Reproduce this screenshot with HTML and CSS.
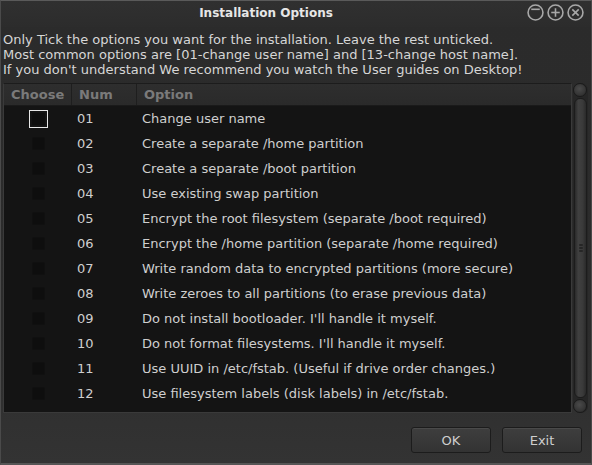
FILE: index.html
```html
<!DOCTYPE html>
<html>
<head>
<meta charset="utf-8">
<link rel="stylesheet" href="styles.css">
</head>
<body>
<div class="window">
  <div class="titlebar">
    <div class="title">Installation Options</div>
    <div class="controls">
      <svg class="ctl" viewBox="0 0 16 16"><circle cx="8" cy="8" r="7" /><line x1="4" y1="5" x2="12" y2="5"/></svg>
      <svg class="ctl" viewBox="0 0 16 16"><circle cx="8" cy="8" r="7" /><line x1="4" y1="8" x2="12" y2="8"/><line x1="8" y1="4" x2="8" y2="12"/></svg>
      <svg class="ctl" viewBox="0 0 16 16"><circle cx="8" cy="8" r="7" /><line x1="5" y1="5" x2="11" y2="11"/><line x1="11" y1="5" x2="5" y2="11"/></svg>
    </div>
  </div>
  <div class="intro">
    <p>Only Tick the options you want for the installation. Leave the rest unticked.</p>
    <p>Most common options are [01-change user name] and [13-change host name].</p>
    <p>If you don't understand We recommend you watch the User guides on Desktop!</p>
  </div>
  <div class="content">
    <div class="table">
      <div class="head">
        <div class="hc c1">Choose</div>
        <div class="hc c2">Num</div>
        <div class="hc c3">Option</div>
      </div>
      <div class="rows">
        <div class="row"><div class="c1"><span class="cb focus"></span></div><div class="c2">01</div><div class="c3">Change user name</div></div>
        <div class="row"><div class="c1"><span class="cb"></span></div><div class="c2">02</div><div class="c3">Create a separate /home partition</div></div>
        <div class="row"><div class="c1"><span class="cb"></span></div><div class="c2">03</div><div class="c3">Create a separate /boot partition</div></div>
        <div class="row"><div class="c1"><span class="cb"></span></div><div class="c2">04</div><div class="c3">Use existing swap partition</div></div>
        <div class="row"><div class="c1"><span class="cb"></span></div><div class="c2">05</div><div class="c3">Encrypt the root filesystem (separate /boot required)</div></div>
        <div class="row"><div class="c1"><span class="cb"></span></div><div class="c2">06</div><div class="c3">Encrypt the /home partition (separate /home required)</div></div>
        <div class="row"><div class="c1"><span class="cb"></span></div><div class="c2">07</div><div class="c3">Write random data to encrypted partitions (more secure)</div></div>
        <div class="row"><div class="c1"><span class="cb"></span></div><div class="c2">08</div><div class="c3">Write zeroes to all partitions (to erase previous data)</div></div>
        <div class="row"><div class="c1"><span class="cb"></span></div><div class="c2">09</div><div class="c3">Do not install bootloader. I'll handle it myself.</div></div>
        <div class="row"><div class="c1"><span class="cb"></span></div><div class="c2">10</div><div class="c3">Do not format filesystems. I'll handle it myself.</div></div>
        <div class="row"><div class="c1"><span class="cb"></span></div><div class="c2">11</div><div class="c3">Use UUID in /etc/fstab. (Useful if drive order changes.)</div></div>
        <div class="row"><div class="c1"><span class="cb"></span></div><div class="c2">12</div><div class="c3">Use filesystem labels (disk labels) in /etc/fstab.</div></div>
      </div>
    </div>
    <div class="scrollbar">
      <div class="knob"></div>
      <div class="thumb"><div class="grip"><i></i><i></i><i></i></div></div>
      <div class="knob"></div>
    </div>
  </div>
  <div class="buttons">
    <button class="btn">OK</button>
    <button class="btn">Exit</button>
  </div>
</div>
</body>
</html>
```

FILE: styles.css
```css
* { box-sizing: border-box; }
html, body { margin: 0; padding: 0; background: #2a2a2a; }
body {
  font-family: "DejaVu Sans", "Liberation Sans", sans-serif;
  font-size: 13px;
  color: #d6d6d6;
}
.window {
  width: 592px;
  height: 465px;
  display: flex;
  flex-direction: column;
  background: linear-gradient(#2b2b2b, #2c2c2c 70%, #333333);
  border: 1px solid #4a4a4a;
  border-top-color: #5a5a5a;
  border-bottom: 2px solid #555;
}
.titlebar {
  height: 26px;
  flex: none;
  display: flex;
  align-items: center;
  justify-content: center;
  position: relative;
  background: linear-gradient(#303030, #2c2c2c);
}
.title {
  font-weight: bold;
  color: #e6e6e6;
  font-size: 12px;
  margin-right: 60px;
  margin-top: -3px;
}
.controls {
  position: absolute;
  right: 7px;
  top: 3px;
  display: flex;
  gap: 3px;
}
.ctl {
  width: 17px;
  height: 17px;
  fill: none;
  stroke: #a8a8a8;
  stroke-width: 1.5;
}
.intro {
  padding: 5px 0 0 2px;
  flex: none;
}
.intro p {
  margin: 0;
  line-height: 15px;
  white-space: nowrap;
}
.content {
  display: flex;
  padding: 6px 3px 0 2px;
  gap: 1px;
  flex: none;
  height: 336px;
}
.table {
  width: 570px;
  height: 330px;
  background: #141414;
  border: 1px solid #3a3a3a;
  border-top-color: #1c1c1c;
  display: flex;
  flex-direction: column;
}
.head {
  height: 22px;
  display: flex;
  background: linear-gradient(#2e2e2e, #2a2a2a);
  border-bottom: 1px solid #1a1a1a;
}
.hc {
  font-weight: bold;
  color: #7a7a7a;
  display: flex;
  align-items: center;
  padding-left: 7px;
  border-right: 1px solid #1e1e1e;
}
.c1 { width: 68px; flex: none; }
.c2 { width: 65px; flex: none; }
.c3 { flex: 1; border-right: none; }
.row {
  height: 25px;
  display: flex;
  align-items: center;
}
.row .c1 {
  display: flex;
  justify-content: center;
}
.row .c2 { padding-left: 5px; color: #cfcfcf; }
.row .c3 { padding-left: 5px; color: #cfcfcf; white-space: nowrap; }
.cb {
  display: block;
  width: 13px;
  height: 13px;
  background: #0e0e0e;
  border: 1px solid #101010;
  border-radius: 2px;
}
.cb.focus {
  width: 19px;
  height: 18px;
  border: 1px solid #e8e8e8;
  border-radius: 0;
  background: #0e0e0e;
  box-shadow: inset 0 0 0 2px #141414;
  margin-left: 1px;
}
.scrollbar {
  width: 15px;
  display: flex;
  flex-direction: column;
  height: 330px;
  background: #262626;
  border-radius: 7px;
}
.knob {
  width: 14px;
  height: 14px;
  border-radius: 50%;
  flex: none;
  background: radial-gradient(circle at 45% 40%, #4a4a4a, #323232 70%);
  border: 1px solid #1a1a1a;
}
.thumb {
  flex: 1;
  margin: 1px 1px;
  border-radius: 6px;
  background: linear-gradient(90deg, #2a2a2a, #404040 30%, #3a3a3a 70%, #2a2a2a);
  border: 1px solid #1c1c1c;
  display: flex;
  align-items: center;
  justify-content: center;
}
.grip {
  display: flex;
  flex-direction: column;
  gap: 1px;
}
.grip i {
  display: block;
  width: 4px;
  height: 2px;
  background: #262626;
  border-radius: 1px;
}
.buttons {
  display: flex;
  justify-content: flex-end;
  gap: 11px;
  padding: 14px 9px 0 0;
}
.btn {
  width: 80px;
  height: 26px;
  font-family: "DejaVu Sans", "Liberation Sans", sans-serif;
  font-size: 13px;
  color: #cfcfcf;
  background: linear-gradient(#3e3e3e, #333333);
  border: 1px solid #1c1c1c;
  border-radius: 3px;
  box-shadow: inset 0 1px 0 #4a4a4a;
  padding: 0;
}
```
